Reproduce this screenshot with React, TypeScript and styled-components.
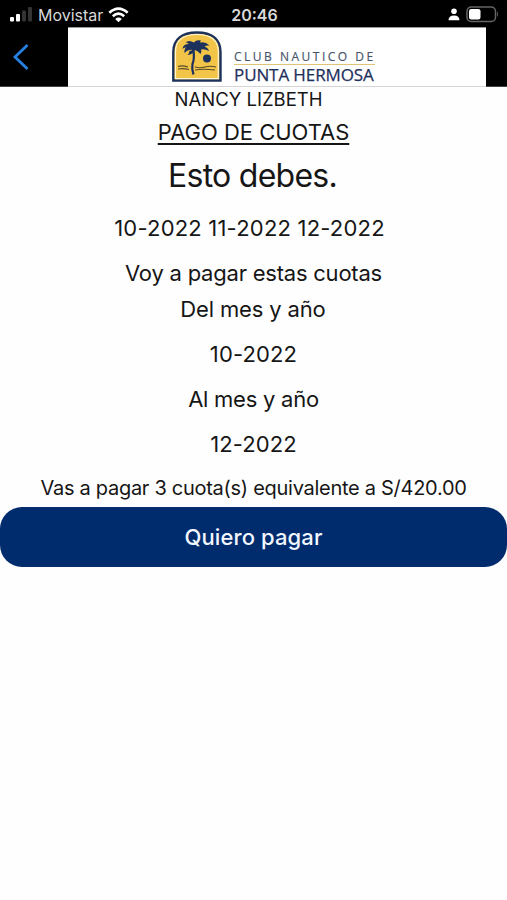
import React from "react";
import styled, { createGlobalStyle } from "styled-components";

const GlobalStyle = createGlobalStyle`
  * { box-sizing: border-box; }
  html, body { margin: 0; padding: 0; background: #fefefe; }
  body { font-family: Inter, Roboto, "Liberation Sans", sans-serif; color: #161616; }
`;

const Screen = styled.div`
  width: 507px;
  height: 900px;
  overflow: hidden;
  background: #fefefe;
`;

const StatusBar = styled.div`
  height: 27px;
  display: grid;
  grid-template-columns: 1fr auto 1fr;
  align-items: center;
  padding: 2px 8px 0 10px;
  background: #000;
  color: #d8d8d8;
`;

const StatusGroup = styled.div<{ $end?: boolean }>`
  display: flex;
  align-items: center;
  justify-content: ${(p) => (p.$end ? "flex-end" : "flex-start")};
  gap: ${(p) => (p.$end ? "6px" : "5px")};
`;

const Carrier = styled.span`
  font-size: 16px;
  line-height: 20px;
`;

const Clock = styled.span`
  font-size: 16px;
  line-height: 20px;
  font-weight: 600;
`;

const NavBar = styled.header`
  height: 60px;
  display: flex;
  background: #000;
`;

const BackButton = styled.button`
  width: 68px;
  padding: 0 0 0 12px;
  border: 0;
  border-bottom: 1px solid #444;
  background: #000;
  display: flex;
  align-items: center;
`;

const Banner = styled.div`
  width: 418px;
  display: flex;
  align-items: flex-start;
  gap: 12px;
  padding: 3px 0 0 104px;
  border-top: 1px solid #999;
  border-bottom: 1px solid #d4d4d4;
  background: #fff;
`;

const NavEdge = styled.div`
  flex: 1;
  border-bottom: 1px solid #444;
`;

const ClubName = styled.div`
  width: 141px;
  padding-top: 18px;
  font-family: "Open Sans", "Noto Sans", sans-serif;
  white-space: nowrap;
`;

const ClubTop = styled.div`
  height: 16px;
  border-bottom: 1px solid #dfc476;
  font-size: 12px;
  line-height: 16px;
  letter-spacing: 2.5px;
  color: #46536a;
  -webkit-text-stroke: 0.15px #46536a;
`;

const ClubBottom = styled.div`
  font-size: 17px;
  line-height: 19px;
  letter-spacing: -0.1px;
  color: #1d315b;
  -webkit-text-stroke: 0.25px #1d315b;
`;

const Content = styled.main`
  display: flex;
  flex-direction: column;
`;

type LineProps = { $h: number; $size?: number; $track?: number; $underline?: boolean; $shift?: number };

const Line = styled.p<LineProps>`
  margin: 0;
  padding-right: ${(p) => p.$shift ?? 0}px;
  height: ${(p) => p.$h}px;
  line-height: ${(p) => p.$h}px;
  font-size: ${(p) => p.$size ?? 22}px;
  letter-spacing: ${(p) => p.$track ?? 0}px;
  text-align: center;
  white-space: nowrap;
  text-decoration: ${(p) => (p.$underline ? "underline" : "none")};
  text-decoration-thickness: 1.5px;
  text-underline-offset: 3px;
`;

const PayButton = styled.button`
  height: 60px;
  border: 0;
  border-radius: 22px;
  background: #002c6e;
  color: #f2f6ff;
  font-family: inherit;
  font-size: 22px;
  font-weight: 500;
  letter-spacing: 0.1px;
`;

const Signal = () => (
  <svg width="23" height="15" viewBox="0 0 23 15">
    <rect x="0" y="10" width="4" height="4.5" rx="1" fill="#fff" />
    <rect x="6" y="7" width="4" height="7.5" rx="1" fill="#fff" />
    <rect x="12" y="3.5" width="4" height="11" rx="1" fill="#333" />
    <rect x="18" y="0" width="4" height="14.5" rx="1" fill="#333" />
  </svg>
);

const Wifi = () => (
  <svg width="21" height="16" viewBox="0 0 21 16" fill="none" stroke="#fff" strokeWidth="2.7">
    <path d="M1.3 5.7Q10.5 -2.6 19.7 5.7" />
    <path d="M4.8 9.2Q10.5 4.2 16.2 9.2" />
    <path d="M10.5 15.2L7.2 12Q10.5 9.2 13.8 12Z" fill="#fff" stroke="none" />
  </svg>
);

const Person = () => (
  <svg width="12" height="13" viewBox="0 0 12 13" fill="#fff">
    <circle cx="6" cy="3.3" r="2.8" />
    <path d="M0.5 12.3C0.5 9 2.4 7.5 6 7.5S11.5 9 11.5 12.3Z" />
  </svg>
);

const Battery = () => (
  <svg width="33" height="17" viewBox="0 0 33 17">
    <rect x="1" y="1" width="28.5" height="14.5" rx="4.3" fill="none" stroke="#666" strokeWidth="1.5" />
    <rect x="3" y="3" width="11.5" height="10.5" rx="2.2" fill="#fff" />
    <path d="M31 5.5Q33 8.2 31 11Z" fill="#666" />
  </svg>
);

const ClubLogo = () => (
  <svg width="50" height="51" viewBox="0 0 50 51">
    <path d="M1.3 49.5V21C1.3 8 10 1.5 25 1.5S48.5 8 48.5 21V49.5Z" fill="#f2c448" stroke="#1c315b" strokeWidth="2.4" />
    <path d="M3.5 47.7V21C3.5 9.4 11 3.5 25 3.5S46.3 9.4 46.3 21V47.7Z" fill="none" stroke="#fff7d8" strokeWidth="1.2" />
    <path
      d="M21 19Q16 18 12.5 22Q12 18 14 16.5Q12 16 10.5 18Q11 13 17 13Q15 11 13.5 11.5Q17 8.5 22 11.5Q24 8.5 29 9.5Q28 10.5 28 11.5Q33 10 37.5 14.5Q34 14 32.5 15.5Q36 16.5 37 20Q32.5 17.5 29 18.5Q30 20 28.5 23Q26 20 23 19Q21 23.5 15.5 24Q17.5 22 17.5 20Z"
      fill="#1c315b"
    />
    <path d="M21 17Q23 27 20.5 33Q19.5 38 21.5 43.5" fill="none" stroke="#1c315b" strokeWidth="2.2" />
    <circle cx="35" cy="27.5" r="4" fill="#1c315b" />
    <path
      d="M6 35.5Q10 34 16 36M6 38Q11 37 17 38.5M23 36Q28 37.5 33 36T44 36M23 39Q31 37.5 43 39"
      fill="none"
      stroke="#574b2c"
      strokeWidth="1.2"
    />
  </svg>
);

const lines: { text: string; style: LineProps }[] = [
  { text: "NANCY LIZBETH", style: { $h: 25, $size: 18.5, $shift: 10 } },
  { text: "PAGO DE CUOTAS", style: { $h: 41, $underline: true, $track: -0.02 } },
  { text: "Esto debes.", style: { $h: 45, $size: 32, $track: -0.75, $shift: 2 } },
  { text: "10-2022 11-2022 12-2022", style: { $h: 60, $track: 0.2, $shift: 8 } },
  { text: "Voy a pagar estas cuotas", style: { $h: 31, $track: -0.22 } },
  { text: "Del mes y año", style: { $h: 41, $track: -0.15, $shift: 1 } },
  { text: "10-2022", style: { $h: 49, $track: 0.15 } },
  { text: "Al mes y año", style: { $h: 40, $track: -0.25 } },
  { text: "12-2022", style: { $h: 50, $track: 0.1 } },
  { text: "Vas a pagar 3 cuota(s) equivalente a S/420.00", style: { $h: 38, $size: 20, $track: -0.28 } },
];

export default function App() {
  return (
    <Screen>
      <GlobalStyle />
      <StatusBar>
        <StatusGroup>
          <Signal />
          <Carrier>Movistar</Carrier>
          <Wifi />
        </StatusGroup>
        <Clock>20:46</Clock>
        <StatusGroup $end>
          <Person />
          <Battery />
        </StatusGroup>
      </StatusBar>
      <NavBar>
        <BackButton aria-label="Atrás">
          <svg width="18" height="28" viewBox="0 0 18 28" fill="none">
            <path d="M15.5 2L3 14L15.5 26" stroke="#2580e0" strokeWidth="2.8" />
          </svg>
        </BackButton>
        <Banner>
          <ClubLogo />
          <ClubName>
            <ClubTop>CLUB NAUTICO DE</ClubTop>
            <ClubBottom>PUNTA HERMOSA</ClubBottom>
          </ClubName>
        </Banner>
        <NavEdge />
      </NavBar>
      <Content>
        {lines.map((line, i) => (
          <Line key={i} {...line.style}>
            {line.text}
          </Line>
        ))}
        <PayButton>Quiero pagar</PayButton>
      </Content>
    </Screen>
  );
}
